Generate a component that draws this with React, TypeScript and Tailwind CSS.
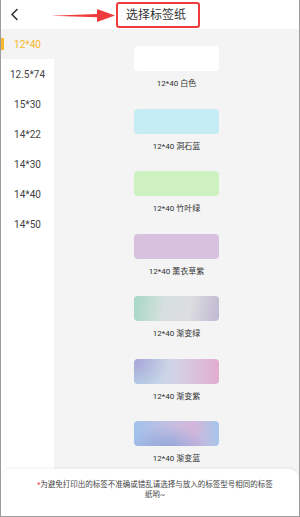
import { useState } from "react";

const sizes = ["12*40", "12.5*74", "15*30", "14*22", "14*30", "14*40", "14*50"];

const papers = [
  { name: "12*40 白色", bg: "bg-white" },
  { name: "12*40 洞石蓝", bg: "bg-[#c3ecf3]" },
  { name: "12*40 竹叶绿", bg: "bg-[#cdf1c1]" },
  { name: "12*40 薰衣草紫", bg: "bg-[#d8c1df]" },
  {
    name: "12*40 渐变绿",
    bg: "bg-[linear-gradient(100deg,#a6d7c6_0%,#d6e0de_35%,#dcdde0_65%,#c0b8d2_100%)]",
  },
  {
    name: "12*40 渐变紫",
    bg: "bg-[radial-gradient(circle_at_0%_0%,#a9a3d6_0%,rgba(169,163,214,0)_40%),linear-gradient(90deg,#b6dbe9_0%,#d4d2e6_50%,#e2acd0_100%)]",
  },
  {
    name: "12*40 渐变蓝",
    bg: "bg-[radial-gradient(ellipse_at_40%_120%,#8ea3da_0%,rgba(142,163,218,0)_60%),linear-gradient(90deg,#a2c2ea_0%,#c6bee0_45%,#d4b6da_70%,#a6c6ea_100%)]",
  },
];

export default function App() {
  const [active, setActive] = useState(sizes[0]);

  return (
    <div className="relative flex h-[517px] w-[300px] flex-col overflow-hidden border-x border-b border-[#9c9c9c] bg-[#f4f4f4] font-['Roboto','Noto_Sans_CJK_SC',sans-serif] text-[#333]">
      {/* header */}
      <header className="relative flex h-[29px] shrink-0 items-center bg-white">
        <button type="button" className="ml-[7px] flex h-[20px] w-[12px] items-center justify-center">
          <svg width="9" height="13" viewBox="0 0 9 13" fill="none">
            <path d="M7 1.5L2 6.5L7 11.5" stroke="#333" strokeWidth="1.6" strokeLinecap="round" strokeLinejoin="round" />
          </svg>
        </button>
        <h1 className="ml-[96px] flex h-[26px] w-[84px] items-center rounded-[3px] border-2 border-[#ee3b3b] pl-[8px] text-[12px] leading-none">
          选择标签纸
        </h1>
        {/* annotation arrow */}
        <svg className="absolute left-[50px] top-[8px]" width="64" height="15" viewBox="0 0 64 15">
          <polygon points="0,7.8 46,6 46,1 64,7.5 46,14 46,9.2" fill="#ee3b3b" />
        </svg>
      </header>

      <div className="flex min-h-0 flex-1">
        {/* sizes */}
        <nav className="flex w-[53px] shrink-0 flex-col">
          {sizes.map((size) => {
            const isActive = size === active;
            return (
              <button
                key={size}
                type="button"
                onClick={() => setActive(size)}
                className={`relative flex h-[30px] items-center justify-center text-[10px] ${
                  isActive ? "bg-[#f4f4f4] text-[#f6b82a]" : "bg-white text-[#444]"
                }`}
              >
                {isActive ? <span className="absolute left-0 top-[9px] h-[12px] w-[3px] bg-[#f6b82a]" /> : null}
                {size}
              </button>
            );
          })}
          <div className="flex-1 bg-white" />
        </nav>

        {/* papers */}
        <main className="flex flex-1 flex-col items-center pt-[17px]">
          {papers.map((paper) => (
            <div key={paper.name} className="mb-[18.5px] flex flex-col items-center">
              <div className={`h-[25px] w-[85px] rounded-[4px] ${paper.bg}`} />
              <p className="mt-[7px] h-[12px] text-[8px] leading-[12px] text-[#333]">{paper.name}</p>
            </div>
          ))}
        </main>
      </div>

      {/* tip */}
      <div className="absolute bottom-0 left-0 right-0 h-[47px] rounded-t-[10px] bg-white pl-[10px] pt-[11px] shadow-[0_-1px_3px_rgba(0,0,0,0.06)]">
        <p className="mx-auto w-[242px] text-center text-[7.5px] leading-[10px] text-[#444]">
          <span className="text-[#f03c3c]">*</span>
          为避免打印出的标签不准确或错乱请选择与放入的标签型号相同的标签纸哟~
        </p>
      </div>
    </div>
  );
}
